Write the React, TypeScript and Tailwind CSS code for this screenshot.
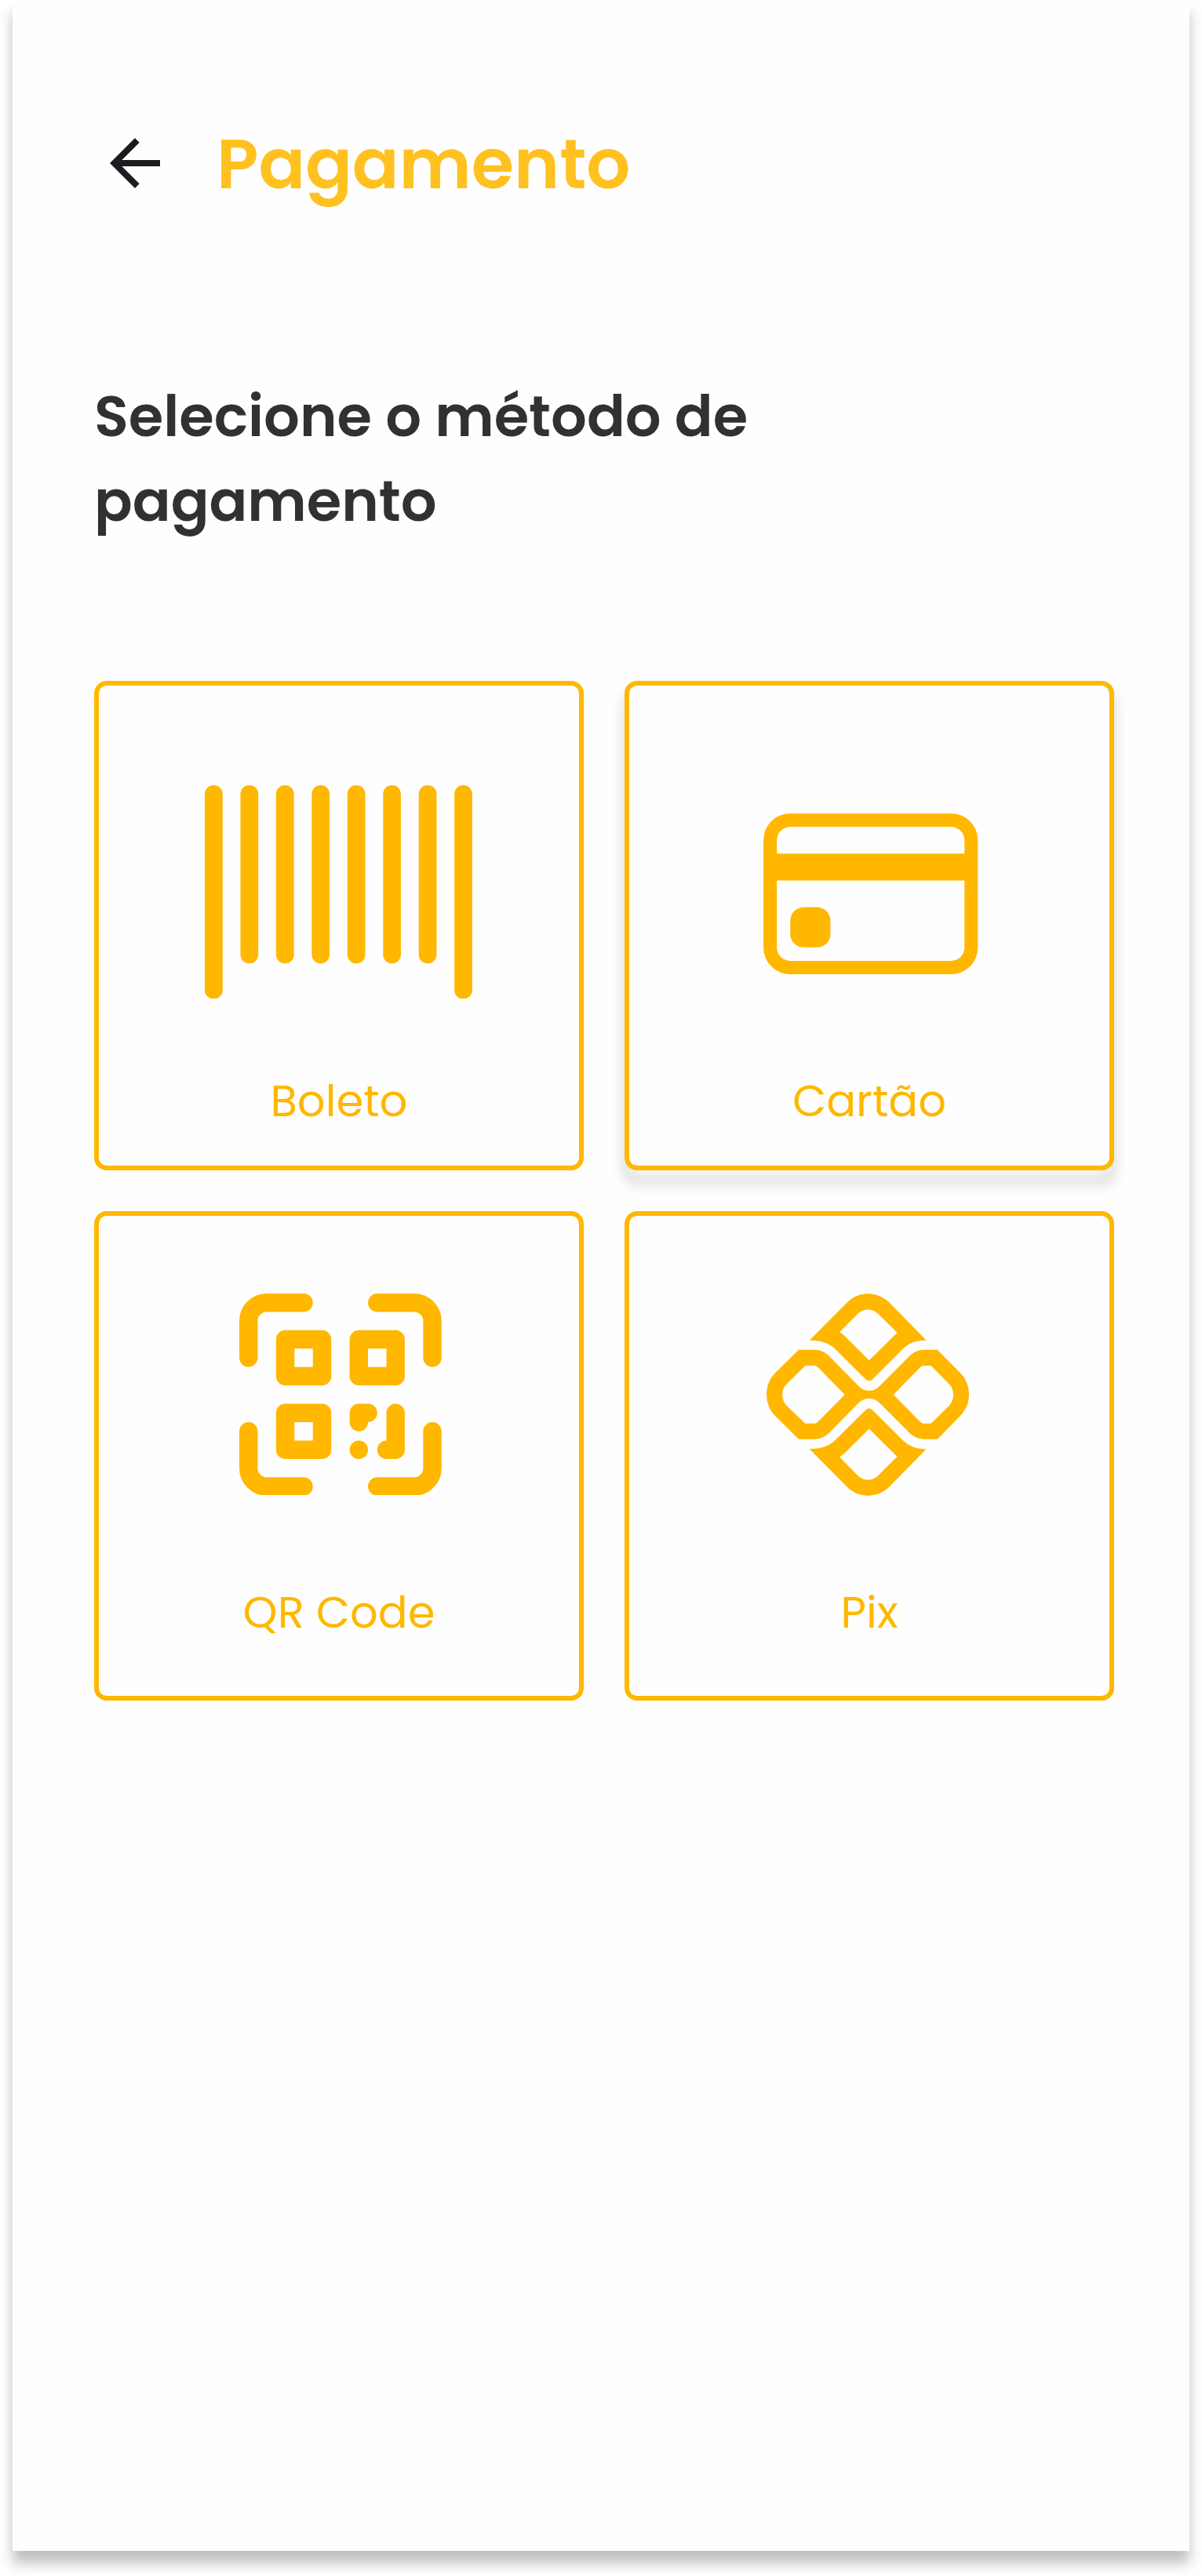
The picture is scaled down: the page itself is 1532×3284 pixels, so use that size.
import type { ReactNode } from "react";

function BackArrow() {
  return (
    <svg viewBox="0 0 16 16" className="mt-8 size-16 shrink-0 fill-[#1d1b20]">
      <path d="M16 7H3.83l5.58-5.59L8 0 0 8l8 8 1.41-1.41L3.83 9H16V7z" />
    </svg>
  );
}

function BarcodeIcon() {
  return (
    <svg viewBox="0 0 15 12" className="h-[272.7px] w-[340.9px] fill-current">
      {[0, 2, 4, 6, 8, 10, 12, 14].map((x) => (
        <rect key={x} x={x} y="0" width="1" height={x === 0 || x === 14 ? 12 : 10} rx="0.5" />
      ))}
    </svg>
  );
}

function CardIcon() {
  return (
    <svg viewBox="0 0 16 12" className="h-[205px] w-[273.4px] fill-current">
      <path
        fillRule="evenodd"
        d="M2 0h12a2 2 0 0 1 2 2v8a2 2 0 0 1-2 2H2a2 2 0 0 1-2-2V2a2 2 0 0 1 2-2zm0 1a1 1 0 0 0-1 1v1h14V2a1 1 0 0 0-1-1H2zM1 5v5a1 1 0 0 0 1 1h12a1 1 0 0 0 1-1V5H1z"
      />
      <rect x="2" y="7" width="3" height="3" rx="1" />
    </svg>
  );
}

function QrIcon() {
  return (
    <svg
      viewBox="0 0 11 11"
      className="size-[257.8px] fill-none stroke-current"
      strokeWidth="1"
      strokeLinecap="round"
      strokeLinejoin="round"
    >
      <path d="M.5 3.5v-2a1 1 0 0 1 1-1h2M7.5.5h2a1 1 0 0 1 1 1v2M.5 7.5v2a1 1 0 0 0 1 1h2M7.5 10.5h2a1 1 0 0 0 1-1v-2" />
      <path d="M2.5 2.5h2v2h-2zM6.5 2.5h2v2h-2zM2.5 6.5h2v2h-2z" />
      <path d="M6.5 7v-.5H7M8.5 6.5v2H8M6.5 8.5h0" />
    </svg>
  );
}

function PixIcon() {
  const wing =
    "M245 234L391 87C434 45 503 45 548 87L692 234C655 233 628 243 604 265L485 384Q473 394 461 384L341 265C317 243 286 234 245 234ZM360 203Q371 209 382 220L473 311L560 225Q570 214 581 205L507 132C486 111 452 111 430 132Z";
  return (
    <svg viewBox="81 55 774 774" className="size-[258px] fill-current" fillRule="evenodd">
      <path d={wing} />
      <path d={wing} transform="translate(0 883.5) scale(1 -1)" />
      <path d="M204 270.500H266Q296 271 319 293L432 408C455 433 491 433 514 408L629 293Q651 271 682 270.500H734L822 359C866 404 866 479 822 523L734 612H682Q651 611 629 590L514 474C491 450 455 450 432 474L319 590Q296 612 266 612H204L114 523C70 479 70 404 114 359ZM229 331L157 402C136 422 136 461 157 483L229 552H264Q271 552 277 546L380 442L277 337Q271 331 264 331ZM710 331H683Q675 331 669 337L566 442L669 546Q675 552 683 552H710L780 483C800 461 800 423 780 402Z" />
    </svg>
  );
}

type Method = { label: string; icon: ReactNode; iconBox: string; raised?: boolean };

const methods: Method[] = [
  { label: "Boleto", icon: <BarcodeIcon />, iconBox: "h-[487.500px] pt-[126.600px] pr-[1.500px]" },
  { label: "Cartão", icon: <CardIcon />, iconBox: "h-[487.500px] pt-[163.200px] pl-[4px]", raised: true },
  { label: "QR Code", icon: <QrIcon />, iconBox: "h-[463.500px] pt-[98.500px] pl-[4px]" },
  { label: "Pix", icon: <PixIcon />, iconBox: "h-[463.500px] pt-[98.500px] pr-[4px]" },
];

export default function App() {
  return (
    <div className="h-[3284px] w-[1532px] overflow-hidden bg-white px-4 font-['Poppins',sans-serif]">
      <main className="h-[3252px] bg-[#fefefe] px-[104px] pt-[144px] shadow-[0_16px_16px_rgba(0,0,0,0.25)]">
        <header className="flex h-[132px] items-start gap-[72px] pl-5">
          <BackArrow />
          <h1 className="text-[88px] leading-[132px] font-semibold whitespace-nowrap text-[#ffc120]">Pagamento</h1>
        </header>
        <h2 className="mt-[201px] text-[72px] leading-[108px] font-semibold whitespace-nowrap text-[#313131]">
          Selecione o método de
          <br />
          pagamento
        </h2>
        <div className="mt-[175px] grid w-[1300px] grid-cols-2 gap-[52px]">
          {methods.map((m) => (
            <div key={m.label} className="relative">
              {/* Only the outline of the raised card casts a shadow. */}
              {m.raised && (
                <span className="absolute inset-0 translate-y-4 rounded-2xl border-6 border-black/25 blur-[8px]" />
              )}
              <button className="relative flex h-[624px] w-full flex-col items-center rounded-2xl border-6 border-[#ffb700] bg-[#fefefe] text-[#ffb700]">
                <span className={`flex shrink-0 items-start justify-center ${m.iconBox}`}>{m.icon}</span>
                <span className="text-[56px] leading-[84px] whitespace-nowrap">{m.label}</span>
              </button>
            </div>
          ))}
        </div>
      </main>
    </div>
  );
}
